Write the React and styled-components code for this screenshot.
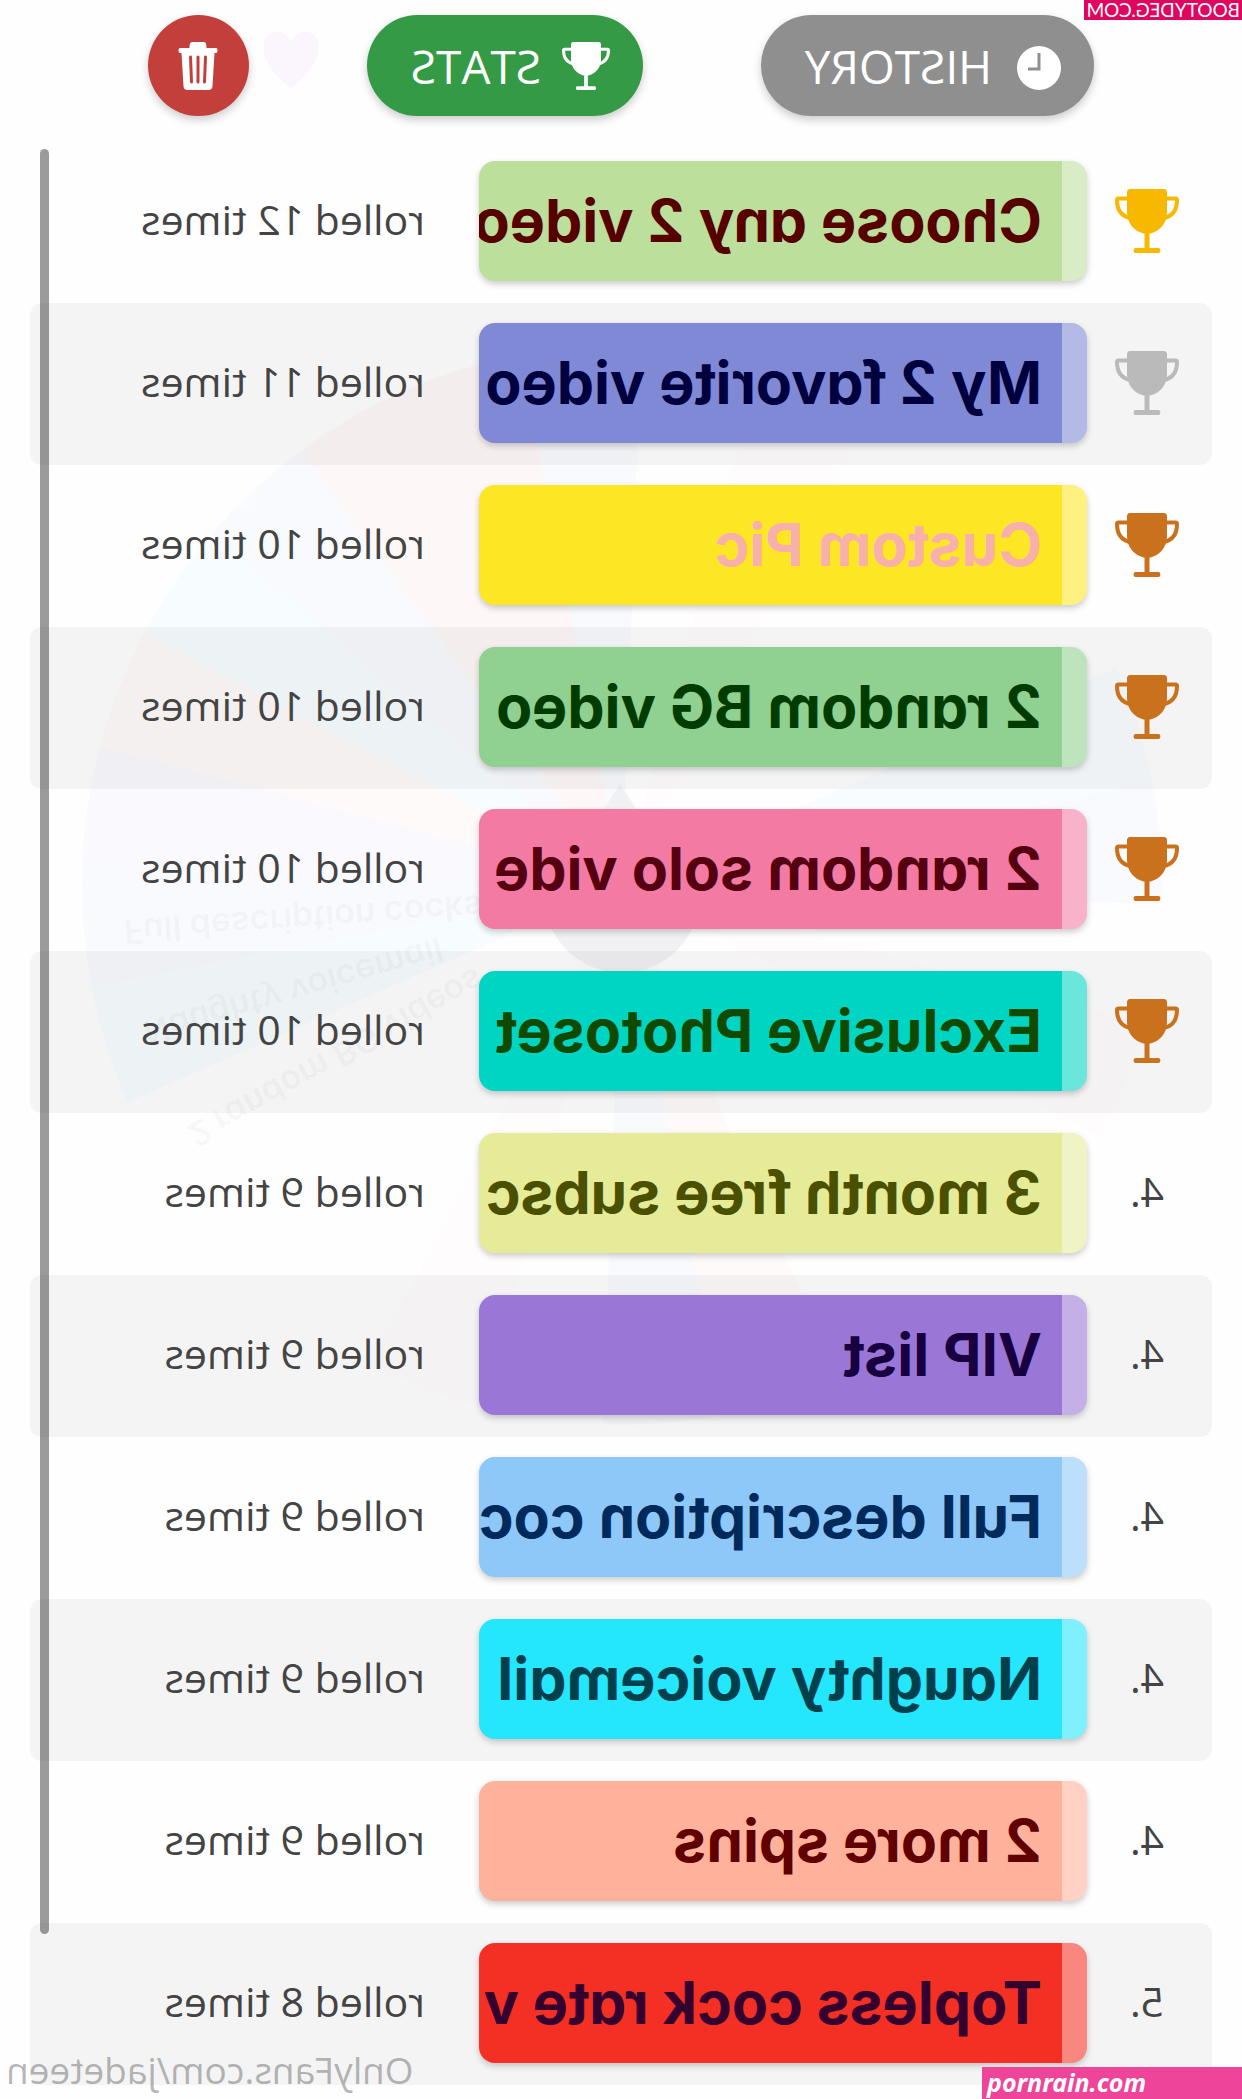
import styled, { createGlobalStyle } from "styled-components";

const GlobalStyle = createGlobalStyle`
  * {
    box-sizing: border-box;
  }

  body {
    margin: 0;
    background-color: #FEFEFE;
    overflow-x: hidden;
  }
`;

const Page = styled.div`
  position: relative;
  overflow: hidden;
  font-family: "Open Sans", "Noto Sans", sans-serif;
`;

// the whole screen is shown flipped, like a front camera preview
const Mirror = styled.main`
  position: relative;
  padding: 15px 30px 14px;
  transform: scaleX(-1);
`;

const Wheel = styled.svg`
  position: absolute;
  top: 0;
  left: 0;
  width: 100%;
  height: auto;
`;

const WheelLabel = styled.text`
  fill: rgba(40, 40, 70, 0.045);
  font-family: Inter, sans-serif;
  font-size: 34px;
  font-weight: 600;
  font-feature-settings: "cv11";
`;

const Toolbar = styled.nav`
  position: relative;
  display: flex;
  justify-content: space-evenly;
  margin-bottom: 25px;
`;

const PillButton = styled.button`
  display: flex;
  align-items: center;
  gap: 21px;
  height: 101px;
  padding: 0 44px 0 33px;
  border: none;
  border-radius: 51px;
  background-color: ${(props) => props.$color};
  box-shadow: 0 4px 8px rgba(0, 0, 0, 0.2);
  color: #FFFFFF;
  font-family: inherit;
  font-size: 46px;
  line-height: 60px;
  cursor: pointer;
`;

const RoundButton = styled(PillButton)`
  justify-content: center;
  width: 101px;
  padding: 0;
`;

const TableWrap = styled.div`
  position: relative;
`;

const Table = styled.table`
  width: 100%;
  table-layout: fixed;
  border-collapse: separate;
  border-spacing: 0;
`;

const Row = styled.tr`
  &:nth-child(even) td {
    background-color: rgba(0, 0, 0, 0.04);
  }

  td:first-child {
    border-radius: 12px 0 0 12px;
  }

  td:last-child {
    border-radius: 0 12px 12px 0;
  }
`;

const RankCell = styled.td`
  width: 125px;
  padding: 0 0 6px 5px;
  color: #444444;
  font-size: 41px;
  text-align: center;

  svg {
    display: block;
    margin: 4px auto 0;
  }
`;

const ItemCell = styled.td`
  padding: 20px 0 22px;
`;

const CountCell = styled.td`
  width: 449px;
  padding: 0 0 6px 54px;
  color: #444444;
  font-size: 41px;
  white-space: nowrap;
`;

const Item = styled.div`
  height: 120px;
  padding-left: 20px;
  border-left: 25px solid rgba(255, 255, 255, 0.42);
  border-radius: 16px;
  background-color: ${(props) => props.$color};
  box-shadow: 0 3px 6px rgba(0, 0, 0, 0.2);
  color: ${(props) => props.$text};
  font-family: Inter, "Open Sans", sans-serif;
  font-size: 59px;
  font-weight: 700;
  font-feature-settings: "cv11";
  line-height: 120px;
  white-space: nowrap;
  overflow: hidden;
`;

const ScrollThumb = styled.div`
  position: absolute;
  top: 8px;
  right: 10px;
  bottom: 151px;
  width: 9px;
  border-radius: 5px;
  background-color: rgba(0, 0, 0, 0.39);
`;

const SiteTag = styled.span`
  position: absolute;
  top: 0;
  left: 0;
  padding: 0 2px;
  background-color: #E0055F;
  color: #FFFFFF;
  font-family: Lato, sans-serif;
  font-size: 19px;
  line-height: 20px;
`;

const ProfileTag = styled.span`
  position: absolute;
  right: 6px;
  bottom: 4px;
  color: rgba(110, 110, 110, 0.5);
  font-size: 37px;
  line-height: 50px;
`;

const CornerBanner = styled.div`
  position: absolute;
  right: 0;
  bottom: 0;
  width: 260px;
  padding: 0 0 2px 5px;
  background-color: #EE4499;
  color: #FFFFFF;
  font-family: "Noto Sans", sans-serif;
  font-size: 25px;
  font-style: italic;
  font-weight: 700;
  line-height: 30px;
`;

const TrophyIcon = ({ size, color }) => (
  <svg width={size} height={size} viewBox="0 0 64 64" fill="none" aria-hidden="true">
    <path
      d="M13 9.500H3.500C2.500 9.500 2 10 2 11C2 20 6 27 15 29M51 9.500H60.500C61.500 9.500 62 10 62 11C62 20 58 27 49 29"
      stroke={color}
      strokeWidth="4"
    />
    <path
      d="M15 0H49C51 0 52 1.500 52 3V23C52 34 45 42 35.500 44.500H28.500C19 42 12 34 12 23V3C12 1.500 13 0 15 0Z"
      fill={color}
    />
    <path d="M29.500 43H34.500V59H43.500C46 59 46 64 43.500 64H20.500C18 64 18 59 20.500 59H29.500Z" fill={color} />
  </svg>
);

const ClockIcon = () => (
  <svg width="48" height="48" viewBox="0 0 48 48" fill="none" aria-hidden="true">
    <circle cx="22" cy="26" r="22" fill="#FFFFFF" />
    <path d="M22 11V27H33" stroke="#8F8F8F" strokeWidth="3" />
  </svg>
);

const TrashIcon = () => (
  <svg width="40" height="48" viewBox="0 0 40 48" fill="none" aria-hidden="true">
    <path
      d="M14 0H26C28 0 28.500 2 28.500 6H38C40 6 40 11 38 11H36.500L34.500 44C34.400 46.500 33 48 30.500 48H9.500C7 48 5.600 46.500 5.500 44L3.500 11H2C0 11 0 6 2 6H11.500C11.500 2 12 0 14 0Z"
      fill="#FFFFFF"
    />
    <path d="M12.500 15L13.500 40M20 15V40M27.500 15L26.500 40" stroke="#C23F3C" strokeWidth="3" strokeLinecap="round" />
  </svg>
);

const trophyColors = { gold: "#F9B800", silver: "#BABABA", bronze: "#C9711D" };

const stats = [
  { label: "Choose any 2 video", count: 12, trophy: "gold", color: "#BCDF9C", text: "#560000" },
  { label: "My 2 favorite video", count: 11, trophy: "silver", color: "#7F89D5", text: "#00003F" },
  { label: "Custom Pic", count: 10, trophy: "bronze", color: "#FDE725", text: "#F8B0AC" },
  { label: "2 random BG video", count: 10, trophy: "bronze", color: "#90D090", text: "#003C00" },
  { label: "2 random solo vide", count: 10, trophy: "bronze", color: "#F37AA3", text: "#550010" },
  { label: "Exclusive Photoset", count: 10, trophy: "bronze", color: "#00D5C3", text: "#0F4A00" },
  { label: "3 month free subsc", count: 9, rank: 4, color: "#E6EB98", text: "#4A5000" },
  { label: "VIP list", count: 9, rank: 4, color: "#9A77D6", text: "#180040" },
  { label: "Full description cock", count: 9, rank: 4, color: "#8EC8F8", text: "#002A5C" },
  { label: "Naughty voicemail", count: 9, rank: 4, color: "#24E6FD", text: "#003F4C" },
  { label: "2 more spins", count: 9, rank: 4, color: "#FFB29B", text: "#600000" },
  { label: "Topless cock rate v", count: 8, rank: 5, color: "#F43024", text: "#330030" },
];

const SEGMENTS = 28;
const STEP = 360 / SEGMENTS;
const tints = ["#80A0FF", "#40D0FF", "#FFFFFF", "#FFFFFF", "#FFFFFF", "#FFE0F0", "#FFFFFF"];
const topTints = { 22: "#FF4050", 23: "#FF4050", 24: "#8090FF", 25: "#40E0FF", 26: "#FF90A0", 27: "#9090FF", 8: "#FF90A0", 15: "#60D0FF" };

const rimPoint = (deg) => {
  const rad = (deg * Math.PI) / 180;
  return `${620 + 540 * Math.cos(rad)} ${885 + 540 * Math.sin(rad)}`;
};

const wheelLabels = [
  { text: "Full description cocks", angle: 4 },
  { text: "Naughty voicemail", angle: 16 },
  { text: "2 random BG videos", angle: 29 },
];

const SpinWheel = () => (
  <Wheel viewBox="0 0 1242 2099" aria-hidden="true">
    <path
      d="M951 88C925 68 922 52 924 42C928 28 945 28 951 42C957 28 974 28 978 42C980 52 977 68 951 88Z"
      fill="#FBF5FD"
    />
    <g opacity="0.03">
      {Array.from({ length: SEGMENTS }, (_, i) => {
        const start = i * STEP - 2;
        return (
          <path
            key={i}
            d={`M620 885L${rimPoint(start)}A540 540 0 0 1 ${rimPoint(start + STEP)}Z`}
            fill={topTints[i] || tints[i % tints.length]}
          />
        );
      })}
    </g>
    {wheelLabels.map((label) => (
      <WheelLabel
        key={label.text}
        transform={`translate(620 885) rotate(${label.angle}) translate(500 0) rotate(180)`}
      >
        {label.text}
      </WheelLabel>
    ))}
    <circle cx="620" cy="895" r="78" fill="#F1F1F3" />
    <path d="M604 812L622 784L640 812Z" fill="#F1F1F3" />
  </Wheel>
);

const App = () => {
  return (
    <Page>
      <GlobalStyle />
      <Mirror>
        <SpinWheel />
        <Toolbar>
          <PillButton type="button" $color="#8F8F8F">
            <ClockIcon />
            HISTORY
          </PillButton>
          <PillButton type="button" $color="#349A45">
            <TrophyIcon size={48} color="#FFFFFF" />
            STATS
          </PillButton>
          <RoundButton type="button" $color="#C23F3C" aria-label="Delete">
            <TrashIcon />
          </RoundButton>
        </Toolbar>
        <TableWrap>
          <Table>
            <tbody>
              {stats.map((stat) => (
                <Row key={stat.label}>
                  <RankCell>
                    {stat.trophy ? <TrophyIcon size={64} color={trophyColors[stat.trophy]} /> : `${stat.rank}.`}
                  </RankCell>
                  <ItemCell>
                    <Item $color={stat.color} $text={stat.text}>{stat.label}</Item>
                  </ItemCell>
                  <CountCell>rolled {stat.count} times</CountCell>
                </Row>
              ))}
            </tbody>
          </Table>
          <ScrollThumb />
        </TableWrap>
        <SiteTag>BOOTYDEG.COM</SiteTag>
        <ProfileTag>OnlyFans.com/jadeteen</ProfileTag>
      </Mirror>
      <CornerBanner>pornrain.com</CornerBanner>
    </Page>
  );
};

export default App;
